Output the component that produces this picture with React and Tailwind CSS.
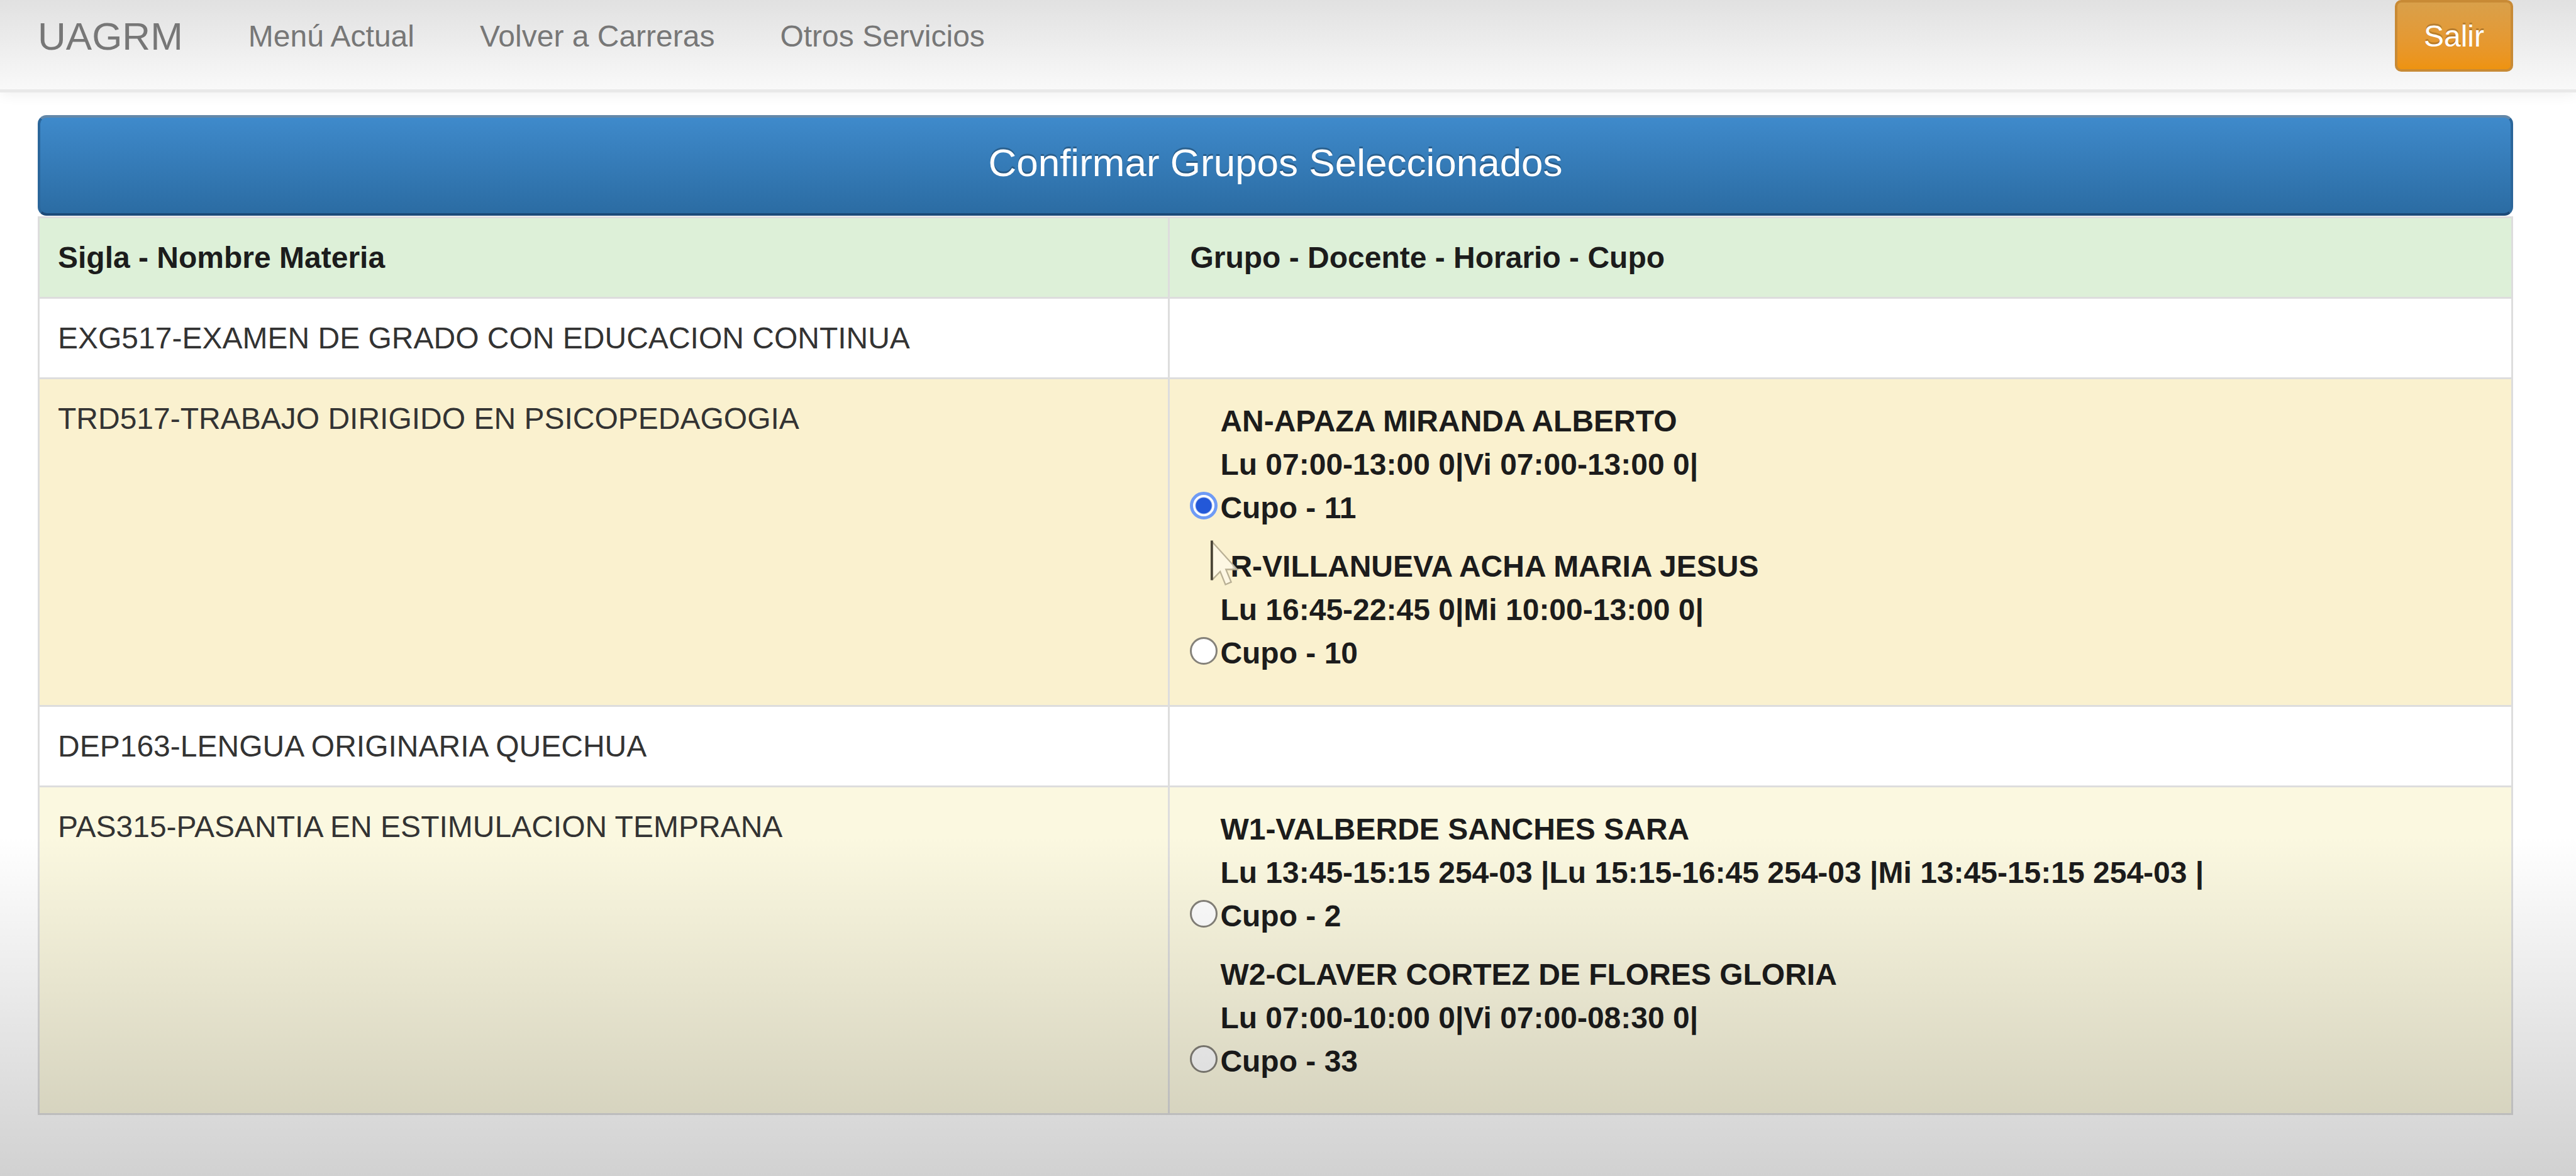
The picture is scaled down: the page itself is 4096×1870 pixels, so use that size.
import { useState } from "react";

const navLinks = ["Menú Actual", "Volver a Carreras", "Otros Servicios"];

const subjects = [
  { name: "EXG517-EXAMEN DE GRADO CON EDUCACION CONTINUA", tone: "bg-white", groups: [] },
  {
    name: "TRD517-TRABAJO DIRIGIDO EN PSICOPEDAGOGIA",
    tone: "bg-[#faf1cf]",
    groups: [
      { id: "AN", teacher: "AN-APAZA MIRANDA ALBERTO", schedule: "Lu 07:00-13:00 0|Vi 07:00-13:00 0|", seats: "Cupo - 11" },
      { id: "R", teacher: "R-VILLANUEVA ACHA MARIA JESUS", schedule: "Lu 16:45-22:45 0|Mi 10:00-13:00 0|", seats: "Cupo - 10", pointer: true },
    ],
  },
  { name: "DEP163-LENGUA ORIGINARIA QUECHUA", tone: "bg-white", groups: [] },
  {
    name: "PAS315-PASANTIA EN ESTIMULACION TEMPRANA",
    tone: "bg-[#fbf8e0]",
    groups: [
      { id: "W1", teacher: "W1-VALBERDE SANCHES SARA", schedule: "Lu 13:45-15:15 254-03 |Lu 15:15-16:45 254-03 |Mi 13:45-15:15 254-03 |", seats: "Cupo - 2" },
      { id: "W2", teacher: "W2-CLAVER CORTEZ DE FLORES GLORIA", schedule: "Lu 07:00-10:00 0|Vi 07:00-08:30 0|", seats: "Cupo - 33" },
    ],
  },
];

function MousePointer() {
  return (
    <svg aria-hidden="true" viewBox="0 0 12 20" className="pointer-events-none absolute -top-2 -left-4 h-[76px] w-[46px]">
      <path d="M.7 .8V16.6L4.2 13.4L6.4 18.8L8.8 17.8L6.6 12.5H11.3Z" fill="#fdf8e6" fillOpacity="0.85" />
      <path d="M.9 16.8L4.2 13.4L6.4 18.8L8.8 17.8L6.6 12.5H11.3L.9 1" fill="none" stroke="#b9b095" strokeWidth="0.6" />
      <path d="M.7 .4V17" stroke="#4a4536" strokeWidth="1" />
    </svg>
  );
}

function GroupOption({ group, checked, onSelect }) {
  return (
    <label className="flex w-fit items-end font-bold">
      <input
        type="radio"
        name="grupo"
        value={group.id}
        checked={checked}
        onChange={onSelect}
        className="mb-4 size-11 shrink-0 appearance-none rounded-full border-[3px] border-[#85827a] bg-white checked:border-[5px] checked:border-[#6f9bf5] checked:bg-[radial-gradient(circle,#2358d8_0_12px,#ffffff_14px)]"
      />
      <span className="relative ml-1">
        {group.pointer && <MousePointer />}
        <span className={group.pointer ? "block pl-4" : "block"}>{group.teacher}</span>
        <span className="block">{group.schedule}</span>
        <span className="block">{group.seats}</span>
      </span>
    </label>
  );
}

export default function App() {
  const [selected, setSelected] = useState("AN");

  return (
    <div className="relative min-h-screen bg-white font-['Liberation_Sans',Arial,sans-serif] text-[48px] leading-[69px] text-[#333333]">
      <header className="flex items-start justify-between border-b-[5px] border-[#e9e9e9] bg-linear-to-b from-[#e1e1e1] to-[#f9f9f9] pr-[100px] pb-7 pl-[60px] shadow-[0_4px_20px_rgba(0,0,0,0.06)]">
        <nav className="flex h-[114px] items-center gap-[104px] text-[#777777]">
          <a href="#" className="text-[62px]">UAGRM</a>
          {navLinks.map((label) => (
            <a key={label} href="#">{label}</a>
          ))}
        </nav>
        <button
          type="button"
          className="h-[114px] rounded-[10px] border-[4px] border-[#c88a35] bg-linear-to-b from-[#d9a04a] to-[#ee930f] px-[42px] text-white [text-shadow:0_-3px_0_rgba(0,0,0,0.2)]"
        >
          Salir
        </button>
      </header>

      <main className="pt-9 pr-[100px] pb-24 pl-[60px]">
        <h1 className="rounded-[14px] border-[4px] border-t-[#6488a8] border-r-[#2b669a] border-b-[#1c4a78] border-l-[#2b669a] bg-linear-to-b from-[#3f8acb] to-[#2b6ca3] pt-9 pb-11 text-center text-[62px] leading-[72px] text-white [text-shadow:0_-3px_0_rgba(0,0,0,0.25)]">
          Confirmar Grupos Seleccionados
        </h1>
        <table className="mt-px w-full table-fixed border-collapse border-[3px] border-[#dddddd]">
          <colgroup>
            <col className="w-[45.7%]" />
            <col />
          </colgroup>
          <thead>
            <tr className="bg-[#ddf0d8] text-left text-[#1c1c1c]">
              <th className="border-[3px] border-[#dddddd] px-[29px] py-7">Sigla - Nombre Materia</th>
              <th className="border-[3px] border-[#dddddd] px-8 py-7">Grupo - Docente - Horario - Cupo</th>
            </tr>
          </thead>
          <tbody>
            {subjects.map((subject) => (
              <tr key={subject.name} className={subject.tone}>
                <td className="border-[3px] border-[#dddddd] px-[29px] py-7 align-top">{subject.name}</td>
                <td className="border-[3px] border-[#dddddd] px-8 align-top text-[#1c1c1c]">
                  {subject.groups.length > 0 && (
                    <div className="flex flex-col gap-6 pt-8 pb-12">
                      {subject.groups.map((group) => (
                        <GroupOption
                          key={group.id}
                          group={group}
                          checked={selected === group.id}
                          onSelect={() => setSelected(group.id)}
                        />
                      ))}
                    </div>
                  )}
                </td>
              </tr>
            ))}
          </tbody>
        </table>
      </main>

      <div className="pointer-events-none absolute inset-x-0 bottom-0 h-[29%] bg-linear-to-b from-black/0 to-black/18" />
    </div>
  );
}
